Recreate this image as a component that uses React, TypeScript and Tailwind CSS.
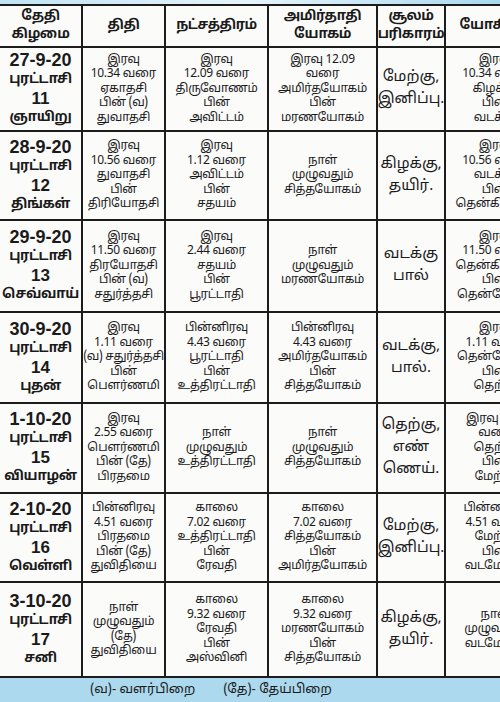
const header = [
  ["தேதி", "கிழமை"],
  ["திதி"],
  ["நட்சத்திரம்"],
  ["அமிர்தாதி", "யோகம்"],
  ["சூலம்", "பரிகாரம்"],
  ["யோகினி"],
];

type Row = { date: string[]; cells: string[][] };

const rows: Row[] = [
  {
    date: ["27-9-20", "புரட்டாசி", "11", "ஞாயிறு"],
    cells: [
      ["இரவு", "10.34 வரை", "ஏகாதசி", "பின் (வ)", "துவாதசி"],
      ["இரவு", "12.09 வரை", "திருவோணம்", "பின்", "அவிட்டம்"],
      ["இரவு 12.09", "வரை", "அமிர்தயோகம்", "பின்", "மரணயோகம்"],
      ["மேற்கு,", "இனிப்பு."],
      ["இரவு", "10.34 வரை", "கிழக்கு", "பின்", "வடக்கு"],
    ],
  },
  {
    date: ["28-9-20", "புரட்டாசி", "12", "திங்கள்"],
    cells: [
      ["இரவு", "10.56 வரை", "துவாதசி", "பின்", "திரியோதசி"],
      ["இரவு", "1.12 வரை", "அவிட்டம்", "பின்", "சதயம்"],
      ["நாள்", "முழுவதும்", "சித்தயோகம்"],
      ["கிழக்கு,", "தயிர்."],
      ["இரவு", "10.56 வரை", "வடக்கு", "பின்", "தென்கிழக்கு"],
    ],
  },
  {
    date: ["29-9-20", "புரட்டாசி", "13", "செவ்வாய்"],
    cells: [
      ["இரவு", "11.50 வரை", "திரயோதசி", "பின் (வ)", "சதுர்த்தசி"],
      ["இரவு", "2.44 வரை", "சதயம்", "பின்", "பூரட்டாதி"],
      ["நாள்", "முழுவதும்", "மரணயோகம்"],
      ["வடக்கு", "பால்"],
      ["இரவு", "11.50 வரை", "தென்கிழக்கு", "பின்", "தென்மேற்கு"],
    ],
  },
  {
    date: ["30-9-20", "புரட்டாசி", "14", "புதன்"],
    cells: [
      ["இரவு", "1.11 வரை", "(வ) சதுர்த்தசி", "பின்", "பௌர்ணமி"],
      ["பின்னிரவு", "4.43 வரை", "பூரட்டாதி", "பின்", "உத்திரட்டாதி"],
      ["பின்னிரவு", "4.43 வரை", "அமிர்தயோகம்", "பின்", "சித்தயோகம்"],
      ["வடக்கு,", "பால்."],
      ["இரவு", "1.11 வரை", "தென்மேற்கு", "பின்", "தெற்கு"],
    ],
  },
  {
    date: ["1-10-20", "புரட்டாசி", "15", "வியாழன்"],
    cells: [
      ["இரவு", "2.55 வரை", "பௌர்ணமி", "பின் (தே)", "பிரதமை"],
      ["நாள்", "முழுவதும்", "உத்திரட்டாதி"],
      ["நாள்", "முழுவதும்", "சித்தயோகம்"],
      ["தெற்கு,", "எண்", "ணெய்."],
      ["இரவு 2.55", "வரை", "தெற்கு", "பின்", "மேற்கு"],
    ],
  },
  {
    date: ["2-10-20", "புரட்டாசி", "16", "வெள்ளி"],
    cells: [
      ["பின்னிரவு", "4.51 வரை", "பிரதமை", "பின் (தே)", "துவிதியை"],
      ["காலை", "7.02 வரை", "உத்திரட்டாதி", "பின்", "ரேவதி"],
      ["காலை", "7.02 வரை", "சித்தயோகம்", "பின்", "அமிர்தயோகம்"],
      ["மேற்கு,", "இனிப்பு."],
      ["பின்னிரவு", "4.51 வரை", "மேற்கு", "பின்", "வடமேற்கு"],
    ],
  },
  {
    date: ["3-10-20", "புரட்டாசி", "17", "சனி"],
    cells: [
      ["நாள்", "முழுவதும்", "(தே)", "துவிதியை"],
      ["காலை", "9.32 வரை", "ரேவதி", "பின்", "அஸ்வினி"],
      ["காலை", "9.32 வரை", "மரணயோகம்", "பின்", "சித்தயோகம்"],
      ["கிழக்கு,", "தயிர்."],
      ["நாள்", "முழுவதும்", "வடமேற்கு"],
    ],
  },
];

const cell = "flex flex-col items-center justify-center text-center border-r-2 border-b-2 border-[#1c1c1c] overflow-hidden whitespace-nowrap";

export default function App() {
  return (
    <div className="w-[500px] h-[702px] overflow-hidden bg-[#fbfbfa] text-[#1a1a1a] font-['Noto_Sans_Tamil','Lohit_Tamil','Noto_Sans','Liberation_Sans',sans-serif]">
      <div className="h-[4px] bg-gradient-to-r from-[#bfe3f3] via-[#e6f4fa] to-[#a8d8ee]" />
      <div className="w-[546px] grid grid-cols-[83px_83px_103px_109px_68px_100px] grid-rows-[42px_84px_89px_92px_91px_90px_89px_95px] border-t-2 border-[#1c1c1c]">
        {header.map((h, i) => (
          <div key={i} className={`${cell} font-bold text-[13.5px] leading-[18px] tracking-[-0.4px]`}>
            {h.map((t) => (
              <span key={t}>{t}</span>
            ))}
          </div>
        ))}
        {rows.map((r) => (
          <>
            <div key={r.date[0]} className={`${cell} font-bold text-[13.5px] leading-[19px] tracking-[-0.4px]`}>
              <span className="text-[18px] font-['Liberation_Sans',sans-serif] font-bold tracking-normal">{r.date[0]}</span>
              <span>{r.date[1]}</span>
              <span className="text-[17px] font-['Liberation_Sans',sans-serif] font-bold tracking-normal">{r.date[2]}</span>
              <span>{r.date[3]}</span>
            </div>
            {r.cells.map((c, j) => (
              <div
                key={r.date[0] + j}
                className={`${cell} ${j === 3 ? "text-[15px] leading-[22px]" : "text-[12px] leading-[14.5px] tracking-[-0.3px]"}`}
              >
                {c.map((t, k) => (
                  <span key={k}>{t}</span>
                ))}
              </div>
            ))}
          </>
        ))}
      </div>
      <div className="h-[25px] bg-[#acd9ee] flex items-center pl-[90px] text-[13px] gap-[28px]">
        <span>(வ)- வளர்பிறை</span>
        <span>(தே)- தேய்பிறை</span>
      </div>
    </div>
  );
}
